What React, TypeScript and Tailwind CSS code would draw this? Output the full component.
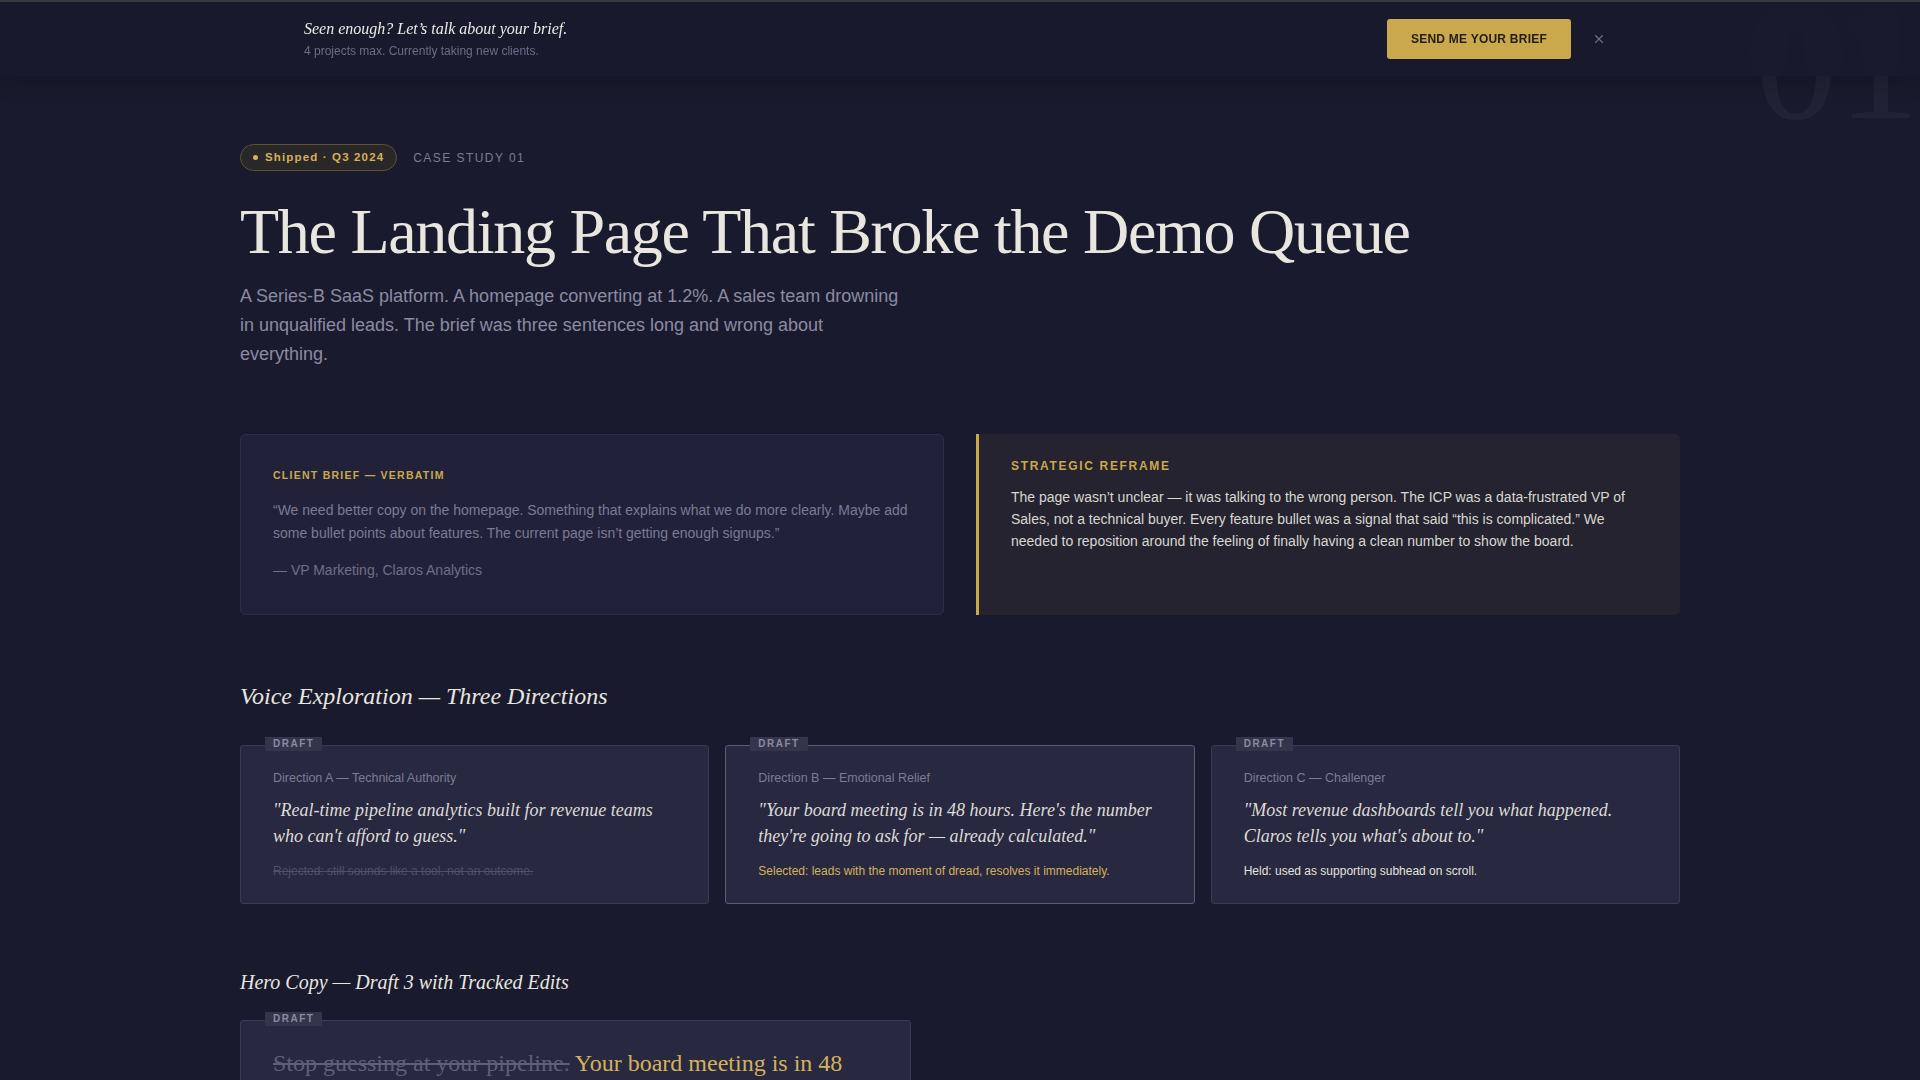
import { X } from 'lucide-react';

interface Direction {
  label: string;
  quote: string;
  note: string;
  status: 'rejected' | 'selected' | 'held';
}

const directions: Direction[] = [
  {
    label: 'Direction A — Technical Authority',
    quote: '"Real-time pipeline analytics built for revenue teams who can\'t afford to guess."',
    note: 'Rejected: still sounds like a tool, not an outcome.',
    status: 'rejected',
  },
  {
    label: 'Direction B — Emotional Relief',
    quote: '"Your board meeting is in 48 hours. Here\'s the number they\'re going to ask for — already calculated."',
    note: 'Selected: leads with the moment of dread, resolves it immediately.',
    status: 'selected',
  },
  {
    label: 'Direction C — Challenger',
    quote: '"Most revenue dashboards tell you what happened. Claros tells you what\'s about to."',
    note: 'Held: used as supporting subhead on scroll.',
    status: 'held',
  },
];

const serif = "font-['Liberation_Serif',Georgia,serif]";

function DraftTag() {
  return (
    <span className="absolute -top-[9px] left-6 bg-[#34344b] px-2 text-[10px] leading-[14px] font-bold tracking-[0.15em] text-[#8a8aa2]">
      DRAFT
    </span>
  );
}

export default function App() {
  return (
    <div className="relative min-h-screen overflow-hidden bg-[#1a1a2e] font-['Liberation_Sans',Arial,sans-serif] text-[#e8e6df]">
      {/* big case number watermark */}
      <div className={`absolute right-0 top-[-20px] text-[165px] leading-none text-white/[0.04] select-none ${serif}`}>
        01
      </div>

      {/* Sticky brief banner */}
      <div className="sticky top-0 z-10 border-t-2 border-[#393944] bg-[#1a1a2e]/85 backdrop-blur shadow-[0_6px_20px_rgba(0,0,0,0.18)]">
        <div className="mx-auto flex w-[1312px] items-center justify-between py-4">
          <div>
            <p className={`text-[16px] leading-[22px] italic text-[#ecebe6] ${serif}`}>
              Seen enough? Let’s talk about your brief.
            </p>
            <p className="mt-[2px] text-[12px] leading-[18px] text-[#6c6c86]">4 projects max. Currently taking new clients.</p>
          </div>
          <div className="flex items-center gap-[17px] pr-[6px]">
            <button className="flex h-10 w-[184px] items-center justify-center rounded-[3px] bg-[#c9a94b] text-[12px] font-bold tracking-[0.02em] text-[#231d10]">
              SEND ME YOUR BRIEF
            </button>
            <button className="p-1 text-[#6c6c86]">
              <X className="h-[14px] w-[14px]" strokeWidth={2} />
            </button>
          </div>
        </div>
      </div>

      <main className="mx-auto w-[1440px] pt-[68px] pb-24">
        {/* Hero */}
        <div className="flex items-center gap-4">
          <span className="flex h-[27px] items-center gap-[7px] rounded-full border border-[#5e5232] bg-[#2a2729] px-3 text-[11.5px] font-bold tracking-[0.1em] text-[#d4b25a]">
            <span className="h-[5px] w-[5px] rounded-full bg-[#d4b25a]" />
            Shipped · Q3 2024
          </span>
          <span className="text-[12px] tracking-[0.12em] text-[#7c7c92]">CASE STUDY 01</span>
        </div>

        <h1 className={`mt-[25px] text-[64px] leading-[72px] tracking-[-0.02em] text-[#e8e6df] ${serif}`}>
          The Landing Page That Broke the Demo Queue
        </h1>
        <p className="mt-[14px] max-w-[672px] text-[18px] leading-[29px] text-[#8b8ba2]">
          A Series-B SaaS platform. A homepage converting at 1.2%. A sales team drowning in unqualified leads. The brief
          was three sentences long and wrong about everything.
        </p>

        {/* Brief vs reframe */}
        <div className="mt-[65px] grid grid-cols-2 gap-8">
          <div className="rounded-[5px] border border-[#2d2d47] bg-[#21213a] px-8 pt-8 pb-[34px]">
            <p className="text-[10.5px] leading-4 font-bold tracking-[0.12em] text-[#c9a94b]">CLIENT BRIEF — VERBATIM</p>
            <p className="mt-4 text-[14px] leading-[23px] text-[#7b7b93]">
              “We need better copy on the homepage. Something that explains what we do more clearly. Maybe add some
              bullet points about features. The current page isn’t getting enough signups.”
            </p>
            <p className="mt-[15px] text-[14px] leading-5 text-[#6f6f88]">— VP Marketing, Claros Analytics</p>
          </div>
          <div className="rounded-r-[5px] border-l-[3px] border-[#c9a94b] bg-[#24232f] px-8 pt-6 pb-8">
            <p className="text-[12px] leading-4 font-bold tracking-[0.14em] text-[#c9a94b]">STRATEGIC REFRAME</p>
            <p className="mt-3 text-[14px] leading-[22px] text-[#d9d7d1]">
              The page wasn’t unclear — it was talking to the wrong person. The ICP was a data-frustrated VP of Sales,
              not a technical buyer. Every feature bullet was a signal that said “this is complicated.” We needed to
              reposition around the feeling of finally having a clean number to show the board.
            </p>
          </div>
        </div>

        {/* Voice exploration */}
        <h2 className={`mt-[65px] text-[24px] leading-8 italic text-[#e8e6df] ${serif}`}>Voice Exploration — Three Directions</h2>
        <div className="mt-[33px] grid grid-cols-3 gap-4">
          {directions.map((d) => (
            <div
              key={d.label}
              className={`relative rounded-[3px] border bg-[#282840] px-8 pt-6 pb-6 ${
                d.status === 'selected' ? 'border-[#5c5c74]' : 'border-[#3a3a54]'
              }`}
            >
              <DraftTag />
              <p className="text-[12.5px] leading-4 text-[#7c7c94]">{d.label}</p>
              <p className={`mt-[11px] text-[18px] leading-[26px] italic text-[#dddbd5] ${serif}`}>{d.quote}</p>
              <p
                className={`mt-[14px] text-[12px] leading-4 ${
                  d.status === 'rejected'
                    ? 'text-[#50506a] line-through'
                    : d.status === 'selected'
                      ? 'text-[#d4b25a]'
                      : 'text-[#e4e2dc]'
                }`}
              >
                {d.note}
              </p>
            </div>
          ))}
        </div>

        {/* Hero copy draft */}
        <h2 className={`mt-16 text-[20px] leading-7 italic text-[#e8e6df] ${serif}`}>
          Hero Copy — Draft 3 with Tracked Edits
        </h2>
        <div className="relative mt-6 w-[671px] rounded-[3px] border border-[#3a3a54] bg-[#282840] px-8 pt-6 pb-8">
          <DraftTag />
          <p className={`text-[24px] leading-9 ${serif}`}>
            <span className="text-[#5f5f78] line-through">Stop guessing at your pipeline.</span>{' '}
            <span className="text-[#d4b25a]">
              Your board meeting is in 48 hours. Here’s the number they’re going to ask for — already calculated.
            </span>
          </p>
        </div>
      </main>
    </div>
  );
}
